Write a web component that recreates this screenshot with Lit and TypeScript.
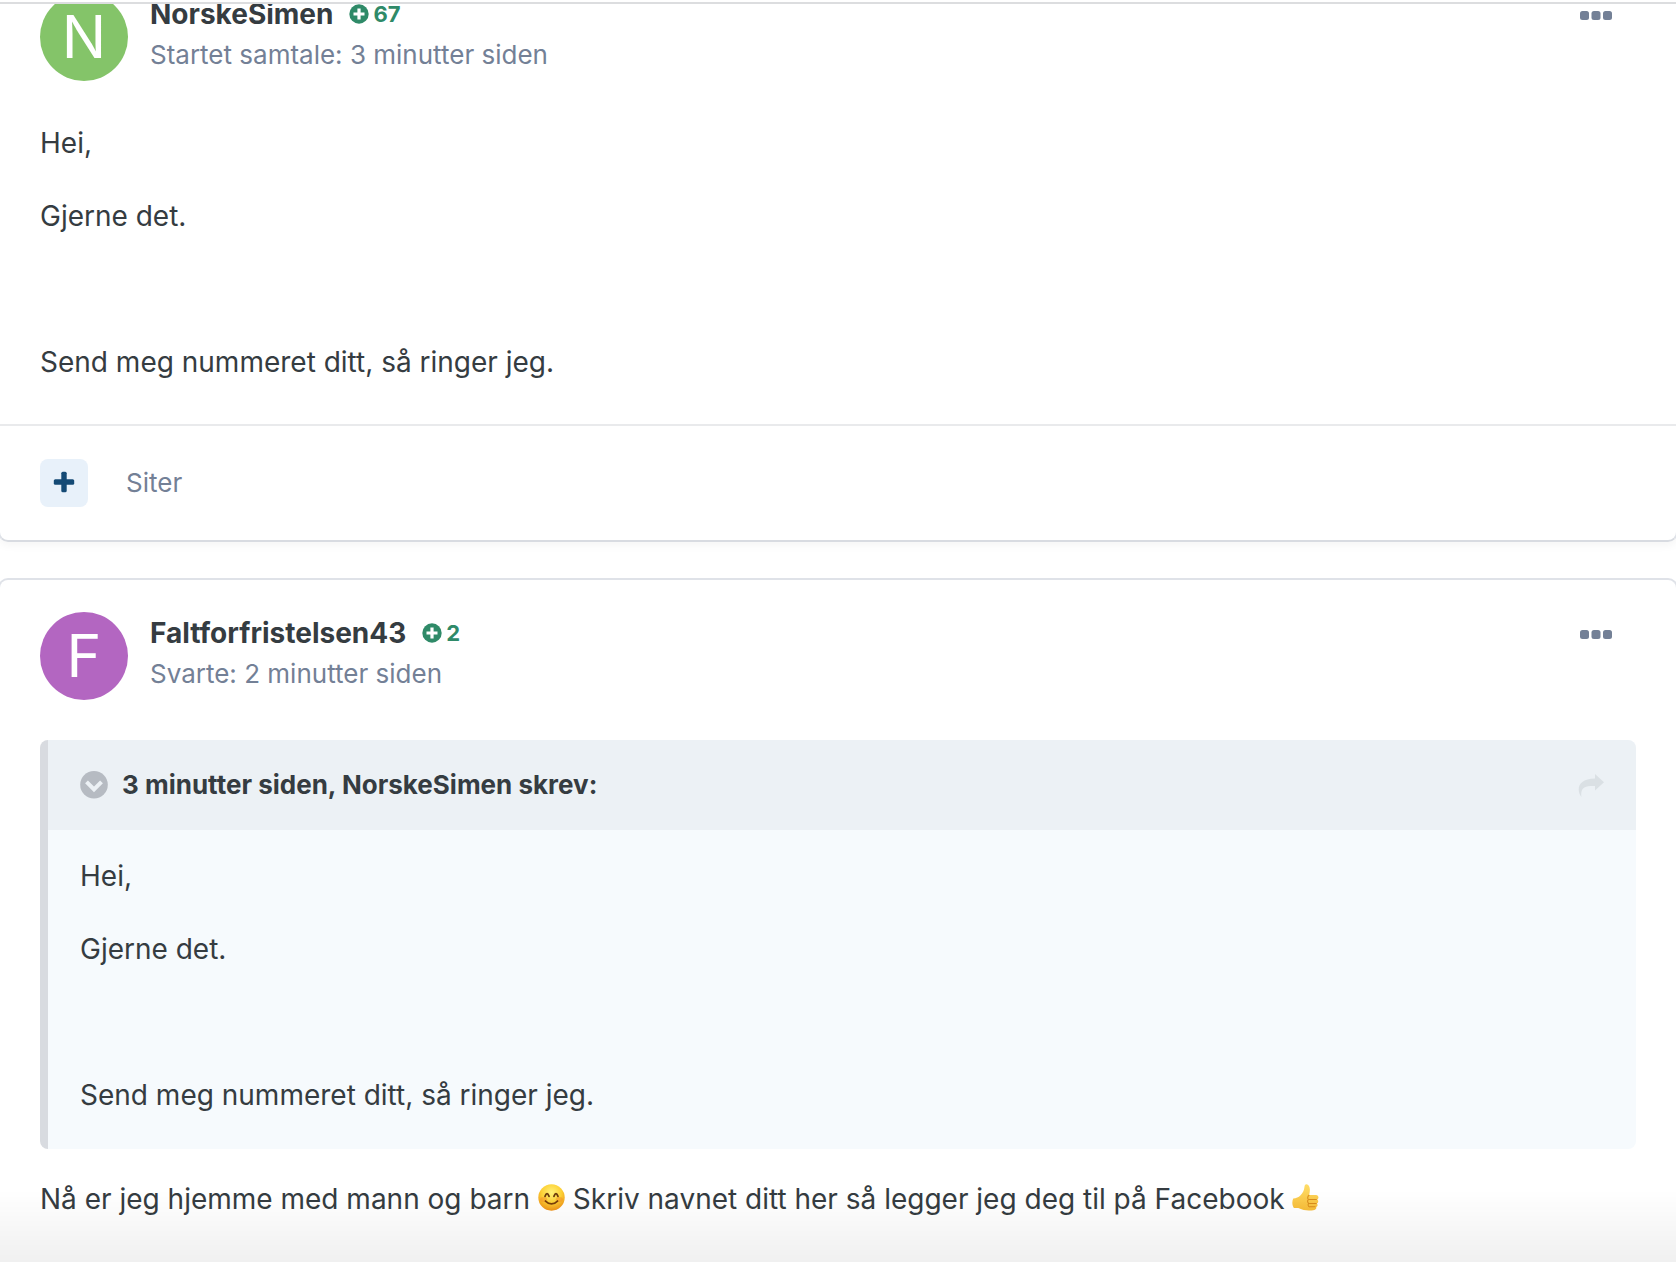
import { LitElement, html, css, svg } from "lit";
import { customElement } from "lit/decorators.js";

interface Post {
  name: string;
  initial: string;
  tone: string;
  points: number;
  meta: string;
}

const message = html`
  <p>Hei,</p>
  <p>Gjerne det.</p>
  <p>&nbsp;</p>
  <p>Send meg nummeret ditt, så ringer jeg.</p>
`;

const smile = html`<svg class="emoji" viewBox="0 0 26 26" role="img" aria-label="smil">
  <defs>
    <radialGradient id="face" cx="50%" cy="32%" r="68%">
      <stop offset="0" stop-color="#fff27a" />
      <stop offset="0.55" stop-color="#fdd136" />
      <stop offset="1" stop-color="#ee9217" />
    </radialGradient>
  </defs>
  <circle cx="13" cy="13" r="12.7" fill="url(#face)" />
  <ellipse cx="5.5" cy="15" rx="3.4" ry="2.4" fill="#f58a2a" opacity=".45" />
  <ellipse cx="20.5" cy="15" rx="3.4" ry="2.4" fill="#f58a2a" opacity=".45" />
  <path d="M6.8 11.800q1.900-5 3.800 0M15.400 11.800q1.900-5 3.800 0" fill="none" stroke="#6b3a0c" stroke-width="1.8" stroke-linecap="round" />
  <path d="M7.200 16.400q5.800 5.600 11.600 0" fill="none" stroke="#7a3e0a" stroke-width="1.7" stroke-linecap="round" />
</svg>`;

const thumb = html`<svg class="emoji" viewBox="0 0 26 26" role="img" aria-label="tommel opp">
  <defs>
    <linearGradient id="hand" x1="0" y1="0" x2="0" y2="1">
      <stop offset="0" stop-color="#ffdd67" />
      <stop offset="1" stop-color="#f7bd38" />
    </linearGradient>
  </defs>
  <path d="M1.200 14C4 13.600 6.400 12.600 8 11c2.200-2.300 3.700-4.600 4-8.200.2-1.700.8-2.600 1.900-2.500 2.400.2 3.500 3 3.300 5.800-.1 2-.4 3.300-.7 4.600l6.600 0c2.600.1 3.200 3.500 1 4.300 1.600.8 1.500 3.100-.1 3.700 1.100.9.800 2.900-.8 3.400.7 1-.1 2.600-1.600 2.900-3.200.7-7.200.7-10.200.1C9 24.600 8 23.500 6 23.100L1.800 23C0 20.500-.1 16.500 1.200 14z" fill="url(#hand)" />
  <path d="M16.800 15h6.700M16.900 18.700h6.400M17 22h5.200M16.400 10.900c-1.500.8-1.600 3-.6 4.100-1.200 1-1 2.800.3 3.700-1 1-.7 2.600.6 3.300" fill="none" stroke="#d98d1c" stroke-width="1" stroke-linecap="round" />
</svg>`;

@customElement("app-root")
export class AppRoot extends LitElement {
  static styles = css`
    :host {
      display: block;
      background: #fff;
      color: #353c41;
      font-family: Inter, "Liberation Sans", sans-serif;
      font-size: 28px;
      line-height: 45px;
    }
    * {
      box-sizing: border-box;
    }
    p,
    blockquote {
      margin: 0;
    }
    button {
      border: 0;
      padding: 0;
      background: none;
      font: inherit;
      color: inherit;
      cursor: pointer;
    }
    a {
      color: inherit;
      text-decoration: none;
    }
    svg {
      display: block;
      flex: none;
    }
    .thread {
      margin-top: 2px;
      border-top: 2px solid #dcdddf;
      overflow: hidden;
      display: flex;
      flex-direction: column;
      gap: 36px;
    }
    .card {
      border: 2px solid #dfe2e8;
      border-bottom-color: #d8dbe1;
      border-radius: 10px;
      margin: 0 -2px;
      box-shadow: 0 4px 8px rgba(0, 0, 0, 0.04);
    }
    .card.scrolled {
      margin-top: -45px;
    }
    .card.open {
      border-bottom: 0;
      border-radius: 10px 10px 0 0;
      box-shadow: none;
    }
    .head {
      display: flex;
      gap: 22px;
      padding: 32px 40px 0;
    }
    .avatar {
      flex: none;
      width: 88px;
      height: 88px;
      border-radius: 50%;
      color: #fff;
      font-size: 59px;
      line-height: 88px;
      text-align: center;
    }
    .green {
      background: #84c469;
    }
    .purple {
      background: #b366c1;
    }
    .who {
      flex: 1;
    }
    .line {
      display: flex;
      align-items: center;
      gap: 16px;
      line-height: 42px;
    }
    .name {
      font-size: 28px;
      font-weight: 700;
    }
    .points {
      display: flex;
      align-items: center;
      gap: 4px;
      color: #2f8a68;
      font-size: 22px;
      font-weight: 700;
    }
    .meta {
      color: #738096;
      font-size: 26px;
      line-height: 39px;
    }
    .more {
      align-self: flex-start;
      margin-right: 24px;
      padding: 18px 0;
      color: #738096;
    }
    .body {
      display: flex;
      flex-direction: column;
      gap: 28px;
      padding: 40px 40px 39px;
    }
    .foot {
      display: flex;
      align-items: center;
      gap: 38px;
      padding: 33px 40px;
      border-top: 2px solid #e9eaec;
      color: #738096;
      font-size: 26px;
      line-height: 48px;
    }
    .plus {
      display: grid;
      place-items: center;
      width: 48px;
      height: 48px;
      padding-bottom: 2px;
      border-radius: 8px;
      background: #e8f1fa;
      color: #144a75;
    }
    .quote {
      border-left: 8px solid #d8dbe0;
      border-radius: 8px;
      background: #f6fafd;
      overflow: hidden;
    }
    .cite {
      display: flex;
      align-items: center;
      gap: 14px;
      padding: 0 32px;
      background: #ecf1f5;
      font-size: 26px;
      font-weight: 700;
      line-height: 90px;
    }
    .cite a {
      margin-left: auto;
    }
    .quoted {
      display: flex;
      flex-direction: column;
      gap: 28px;
      padding: 24px 32px 31px;
    }
    .emoji {
      display: inline-block;
      width: 27px;
      height: 27px;
      vertical-align: -2px;
    }
    .shade {
      position: fixed;
      inset: auto 0 0;
      height: 72px;
      background: linear-gradient(rgba(0, 0, 0, 0), rgba(0, 0, 0, 0.06));
      pointer-events: none;
    }
  `;

  private head(p: Post) {
    return html`<header class="head">
      <div class="avatar ${p.tone}" aria-hidden="true">${p.initial}</div>
      <div class="who">
        <div class="line">
          <a class="name" href="#profil">${p.name}</a>
          <span class="points">
            <svg width="20" height="20" viewBox="0 0 20 20" aria-hidden="true">
              <circle cx="10" cy="10" r="9.7" fill="currentColor" />
              <path d="M10 4.500v11M4.500 10h11" stroke="#fff" stroke-width="3.200" />
            </svg>
            ${p.points}
          </span>
        </div>
        <div class="meta">${p.meta}</div>
      </div>
      <button class="more" aria-label="Flere valg">
        <svg width="32" height="9" viewBox="0 0 32 9" fill="currentColor">
          ${[0, 11.5, 23].map((x) => svg`<rect x=${x} width="9" height="9" rx="2.5" />`)}
        </svg>
      </button>
    </header>`;
  }

  render() {
    return html`
      <main class="thread">
        <article class="card scrolled">
          ${this.head({ name: "NorskeSimen", initial: "N", tone: "green", points: 67, meta: "Startet samtale: 3 minutter siden" })}
          <div class="body">${message}</div>
          <footer class="foot">
            <button class="plus" aria-label="Multisitat">
              <svg width="22" height="22" viewBox="0 0 22 22" fill="currentColor">
                <rect x="8.300" y="0.800" width="5.400" height="20.400" rx="1.500" />
                <rect x="0.800" y="8.300" width="20.400" height="5.400" rx="1.500" />
              </svg>
            </button>
            <a href="#siter">Siter</a>
          </footer>
        </article>
        <article class="card open">
          ${this.head({ name: "Faltforfristelsen43", initial: "F", tone: "purple", points: 2, meta: "Svarte: 2 minutter siden" })}
          <div class="body">
            <blockquote class="quote">
              <div class="cite">
                <svg width="28" height="28" viewBox="0 0 28 28" aria-hidden="true">
                  <circle cx="14" cy="13.800" r="13.800" fill="#b6bbc2" />
                  <path d="M6.500 10.800l7.500 7.500 7.500-7.500" fill="none" stroke="#ecf1f5" stroke-width="4" />
                </svg>
                <span>3 minutter siden, NorskeSimen skrev:</span>
                <a href="#innlegg" aria-label="Gå til innlegget">
                  <svg width="26" height="23" viewBox="0 0 26 23">
                    <path d="M17 0l9 8.200-9 8.300v-4.600C8 11.700 2 12.500 3.400 23 -1.800 16 -.5 4.800 17 4.600z" fill="#dae0e4" />
                  </svg>
                </a>
              </div>
              <div class="quoted">${message}</div>
            </blockquote>
            <p>Nå er jeg hjemme med mann og barn ${smile} Skriv navnet ditt her så legger jeg deg til på Facebook ${thumb}</p>
          </div>
        </article>
      </main>
      <div class="shade"></div>
    `;
  }
}
